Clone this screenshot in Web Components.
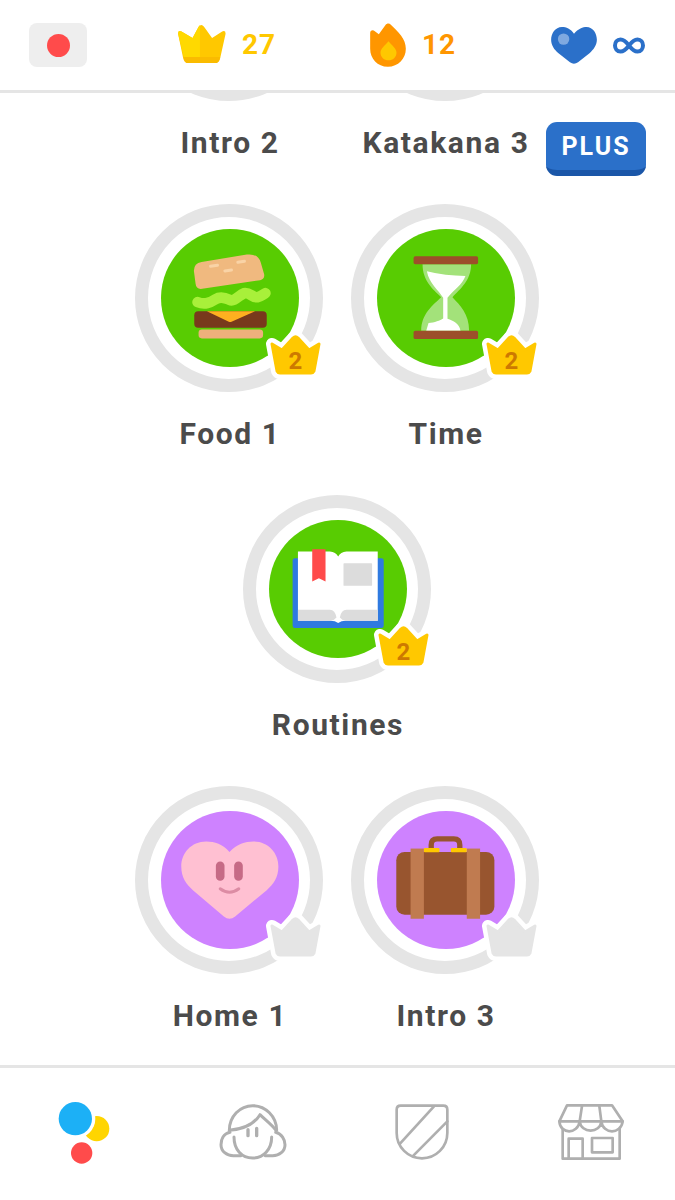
<!DOCTYPE html>
<html>
<head>
<meta charset="utf-8">
<style>
  html, body { margin: 0; padding: 0; background: #fff; }
  body { font-family: Roboto, "Liberation Sans", sans-serif; }
  svg { display: block; }
</style>
</head>
<body>
<duo-app>
  <duo-header slot="header">
    <duo-flag></duo-flag>
    <duo-stat color="#ffc800" value="27">
      <svg slot="icon" style="margin-top:-2px" width="48" height="38" viewBox="535 77 142 113">
        <path d="M545 96 L578 116 L596 82 Q604 72 612 82 L636 116 L666 96 Q677 92 676 104 L660 176 Q657 190 645 190 L565 190 Q553 190 550 176 L535 104 Q534 92 545 96Z" fill="#ffc800"/>
        <path d="M545 96 L578 116 L596 82 Q599 78 600 78 L600 172 L552 172 L535 104 Q534 92 545 96Z" fill="#ffd900"/>
        <path d="M551 172 L660 172 L658 180 Q655 190 645 190 L565 190 Q555 190 553 180Z" fill="#fabb00"/>
      </svg>
    </duo-stat>
    <duo-stat color="#ff9600" value="12">
      <svg slot="icon" width="36" height="44" viewBox="90 68 107 132">
        <path d="M143 199 C112 199 90 175 90 145 L90 98 C90 90 98 87 104 93 L116 102 L136 74 C140 68 148 68 152 73 C175 95 197 115 197 145 C197 175 174 199 143 199Z" fill="#ff9600"/>
        <path d="M145 123 C155 135 169 145 169 157 C169 170 158 180 145 180 C132 180 121 170 121 157 C121 145 135 135 145 123Z" fill="#ffc800"/>
      </svg>
    </duo-stat>
    <duo-stat color="#2b70c9">
      <svg slot="icon" width="46" height="37" viewBox="635 80 136 110">
        <path d="M703 100 C715 85 730 80 740 80 C760 80 771 100 771 118 C771 135 760 148 750 157 L715 185 Q703 193 691 185 L656 157 C645 148 635 135 635 118 C635 100 647 80 667 80 C680 80 693 85 703 100Z" fill="#2b70c9"/>
        <circle cx="672" cy="116" r="17" fill="#7fa9e0"/>
      </svg>
      <svg slot="value" width="32" height="17" viewBox="0 0 32 16">
        <path d="M16 8 C13 4 10 2 7.5 2 C4 2 2 5 2 8 C2 11 4 14 7.5 14 C10 14 13 12 16 8 C19 4 22 2 24.5 2 C28 2 30 5 30 8 C30 11 28 14 24.5 14 C22 14 19 12 16 8Z" fill="none" stroke="#2b70c9" stroke-width="4"/>
      </svg>
    </duo-stat>
  </duo-header>

  <skill-tree slot="main">
    <skill-row class="first">
      <skill-node color="#58cc02" level="2">Intro 2</skill-node>
      <skill-node color="#58cc02" level="2">Katakana 3</skill-node>
    </skill-row>
    <skill-row>
      <skill-node color="#58cc02" level="2">
        <svg slot="icon" width="138" height="138" viewBox="92 85 415 415">
          <path d="M191 212 Q190 188 214 184 L350 162 Q384 158 392 186 L402 220 Q405 236 390 239 L216 265 Q198 268 196 250Z" fill="#f0b97f"/>
          <g stroke="#f9d3a6" stroke-width="9" stroke-linecap="round">
            <path d="M241 197 L262 194"/><path d="M323 185 L343 182"/><path d="M284 211 L304 208"/>
          </g>
          <path d="M202 305 C225 314 240 306 256 296 C272 286 286 292 298 298 C314 305 326 284 342 278 C358 274 370 294 382 290 C392 288 398 282 406 278" fill="none" stroke="#a8f03a" stroke-width="32" stroke-linecap="round" stroke-linejoin="round"/>
          <rect x="192" y="332" width="218" height="50" rx="12" fill="#78391c"/>
          <path d="M230 332 L375 332 L304 364 Q300 366 296 364Z" fill="#ffb020"/>
          <rect x="205" y="387" width="194" height="27" rx="10" fill="#eeb07c"/>
        </svg>
        Food 1
      </skill-node>
      <skill-node color="#58cc02" level="2">
        <svg slot="icon" width="138" height="138" viewBox="95 85 415 415">
          <path d="M232 191 L378 191 C378 240 345 265 322 290 C345 315 372 340 372 391 L228 391 C228 340 262 315 288 290 C262 265 232 240 232 191Z" fill="#a3e27a"/>
          <path d="M245 212 Q300 226 361 226 C352 252 325 268 307 292 L307 355 C325 362 342 368 346 391 L243 391 L250 368 C268 366 285 360 294 354 L294 292 C280 268 252 250 245 212Z" fill="#fff"/>
          <rect x="205" y="167" width="194" height="24" rx="5" fill="#9c4f2a"/>
          <rect x="205" y="391" width="194" height="25" rx="5" fill="#9c4f2a"/>
        </svg>
        Time
      </skill-node>
    </skill-row>
    <skill-row>
      <skill-node color="#58cc02" level="2">
        <svg slot="icon" width="138" height="138" viewBox="85 90 415 415">
          <rect x="156" y="205" width="274" height="210" rx="7" fill="#2f7ae0"/>
          <path d="M172 185 L268 185 Q286 186 293 200 Q300 186 318 185 L412 185 L412 393 L316 393 Q302 393 293 400 Q284 393 270 393 L172 393Z" fill="#fff"/>
          <path d="M172 360 L268 360 Q284 361 288 383 Q280 393 270 393 L172 393Z M412 360 L318 360 Q302 361 298 383 Q306 393 316 393 L412 393Z" fill="#dcdcdc"/>
          <path d="M215 178 L255 178 L255 275 L235 265 L215 275Z" fill="#ff4b4b"/>
          <rect x="309" y="220" width="86" height="68" rx="2" fill="#dcdcdc"/>
        </svg>
        Routines
      </skill-node>
    </skill-row>
    <skill-row>
      <skill-node color="#ce82ff" level="0">
        <svg slot="icon" width="138" height="138" viewBox="92 95 415 415">
          <path d="M298 218 C320 195 345 187 370 187 C415 187 445 222 445 262 C445 295 430 315 410 333 L315 412 Q298 426 281 412 L188 333 C168 315 153 295 153 262 C153 222 183 187 228 187 C253 187 278 195 298 218Z" fill="#ffc0d2"/>
          <rect x="257" y="247" width="26" height="58" rx="13" fill="#c66a86"/>
          <rect x="312" y="247" width="26" height="58" rx="13" fill="#c66a86"/>
          <path d="M270 329 Q298 350 326 329" fill="none" stroke="#dc8ca4" stroke-width="9" stroke-linecap="round"/>
        </svg>
        Home 1
      </skill-node>
      <skill-node color="#ce82ff" level="0">
        <svg slot="icon" width="138" height="138" viewBox="95 95 415 415">
          <path d="M258 212 L258 197 Q258 179 276 179 L326 179 Q344 179 344 197 L344 212" fill="none" stroke="#98552f" stroke-width="16"/>
          <rect x="153" y="218" width="295" height="189" rx="25" fill="#98552f"/>
          <rect x="196" y="208" width="40" height="211" fill="#c07b50"/>
          <rect x="365" y="208" width="40" height="211" fill="#c07b50"/>
          <rect x="236" y="206" width="47" height="13" rx="3" fill="#ffc800"/>
          <rect x="317" y="206" width="48" height="13" rx="3" fill="#ffc800"/>
        </svg>
        Intro 3
      </skill-node>
    </skill-row>
    <plus-badge>PLUS</plus-badge>
  </skill-tree>

  <tab-bar slot="footer">
    <svg width="60" height="70" viewBox="74 110 180 210">
      <circle cx="202" cy="205" r="38" fill="#ffd500"/>
      <circle cx="138" cy="175" r="60" fill="#fff"/>
      <circle cx="138" cy="175" r="50" fill="#1cb0f6"/>
      <circle cx="157" cy="278" r="32" fill="#ff4b4b"/>
    </svg>
    <svg width="74" height="60" viewBox="558 127 222 180" fill="none" stroke="#afafaf" stroke-width="9" stroke-linecap="round" stroke-linejoin="round">
      <path d="M598 212 C598 170 630 138 668 138 C706 138 740 170 740 212"/>
      <path d="M598 212 C640 208 672 195 690 165 C705 180 725 195 738 212"/>
      <path d="M600 218 C580 222 573 240 573 255 C573 275 590 288 610 288 L632 288"/>
      <path d="M737 218 C755 222 765 240 765 255 C765 275 748 288 728 288 L706 288"/>
      <path d="M612 232 C612 270 635 295 668 295 C700 295 725 270 725 232"/>
      <path d="M654 210 L654 228 M680 206 L680 228" stroke-width="10"/>
    </svg>
    <svg width="54" height="58" viewBox="75 130 162 174" fill="none" stroke="#afafaf" stroke-width="8" stroke-linecap="round" stroke-linejoin="round">
      <path d="M92 138 L220 138 Q232 138 232 150 L232 220 A76 76 0 0 1 80 220 L80 150 Q80 138 92 138Z"/>
      <path d="M90 252 L192 140"/>
      <path d="M130 288 L232 185"/>
    </svg>
    <svg width="68" height="58" viewBox="560 130 204 174" fill="none" stroke="#afafaf" stroke-width="8" stroke-linecap="round" stroke-linejoin="round">
      <path d="M590 137 L725 137 L757 185 L567 185Z"/>
      <path d="M567 185 C570 225 622 225 628 185 C632 222 690 222 693 185 C698 225 752 225 757 185"/>
      <path d="M635 139 L628 185 M687 139 L693 185"/>
      <path d="M577 208 L577 297 L748 297 L748 208"/>
      <path d="M595 297 L595 237 L637 237 L637 297"/>
      <rect x="665" y="235" width="62" height="43"/>
    </svg>
  </tab-bar>
</duo-app>

<script>
const appTemplate = document.createElement("template");
appTemplate.innerHTML = /*html*/`
  <style>
    :host { display: flex; flex-direction: column; width: 675px; height: 1200px; overflow: hidden; background: #fff; }
    .main { flex: 1; min-height: 0; overflow: hidden; position: relative; }
  </style>
  <slot name="header"></slot>
  <div class="main"><slot name="main"></slot></div>
  <slot name="footer"></slot>`;

class DuoApp extends HTMLElement {
  constructor() {
    super();
    this.attachShadow({ mode: "open" });
    this.shadowRoot.appendChild(appTemplate.content.cloneNode(true));
  }
}

const headerTemplate = document.createElement("template");
headerTemplate.innerHTML = /*html*/`
  <style>
    :host {
      display: grid;
      grid-template-columns: 149px 192px 181px 1fr;
      align-items: center;
      box-sizing: border-box;
      height: 93px;
      padding: 0 0 0 29px;
      border-bottom: 3px solid #e5e5e5;
      background: #fff;
    }
  </style>
  <slot></slot>`;

class DuoHeader extends HTMLElement {
  constructor() {
    super();
    this.attachShadow({ mode: "open" });
    this.shadowRoot.appendChild(headerTemplate.content.cloneNode(true));
  }
}

const flagTemplate = document.createElement("template");
flagTemplate.innerHTML = /*html*/`
  <style>
    :host { display: flex; align-items: center; justify-content: center; width: 58px; height: 44px; border-radius: 8px; background: #eee; }
    i { display: block; width: 23px; height: 23px; border-radius: 50%; background: #ff4b4b; }
  </style>
  <i></i>`;

class DuoFlag extends HTMLElement {
  constructor() {
    super();
    this.attachShadow({ mode: "open" });
    this.shadowRoot.appendChild(flagTemplate.content.cloneNode(true));
  }
}

const statTemplate = document.createElement("template");
statTemplate.innerHTML = /*html*/`
  <style>
    :host { display: flex; align-items: center; gap: 16px; }
    .value { display: flex; align-items: center; font: 700 28px/1 Roboto, "Liberation Sans", sans-serif; letter-spacing: 1px; }
  </style>
  <slot name="icon"></slot>
  <span class="value"><slot name="value"><span id="num"></span></slot></span>`;

class DuoStat extends HTMLElement {
  constructor() {
    super();
    this.attachShadow({ mode: "open" });
    this.shadowRoot.appendChild(statTemplate.content.cloneNode(true));
  }

  connectedCallback() {
    this.shadowRoot.querySelector(".value").style.color = this.getAttribute("color");
    this.shadowRoot.getElementById("num").textContent = this.getAttribute("value") || "";
  }
}

const treeTemplate = document.createElement("template");
treeTemplate.innerHTML = /*html*/`
  <style>
    :host { display: block; position: relative; margin-top: -180px; }
  </style>
  <slot></slot>`;

class SkillTree extends HTMLElement {
  constructor() {
    super();
    this.attachShadow({ mode: "open" });
    this.shadowRoot.appendChild(treeTemplate.content.cloneNode(true));
  }
}

const rowTemplate = document.createElement("template");
rowTemplate.innerHTML = /*html*/`
  <style>
    :host { display: flex; justify-content: center; gap: 28px; height: 291px; padding-right: 1px; }
  </style>
  <slot></slot>`;

class SkillRow extends HTMLElement {
  constructor() {
    super();
    this.attachShadow({ mode: "open" });
    this.shadowRoot.appendChild(rowTemplate.content.cloneNode(true));
  }
}

const nodeTemplate = document.createElement("template");
nodeTemplate.innerHTML = /*html*/`
  <style>
    :host { display: flex; flex-direction: column; align-items: center; width: 188px; }
    .ring {
      position: relative;
      display: flex;
      align-items: center;
      justify-content: center;
      box-sizing: border-box;
      width: 188px;
      height: 188px;
      padding-left: 2px;
      border: 13px solid #e5e5e5;
      border-radius: 50%;
    }
    .disc { flex: none; width: 138px; height: 138px; border-radius: 50%; overflow: hidden; background: var(--skill-color); }
    .crown { position: absolute; left: 121px; top: 118px; width: 53px; height: 40px; }
    .crown svg { overflow: visible; }
    .level {
      position: absolute;
      left: 0;
      right: 0;
      top: 13px;
      text-align: center;
      font: 700 24px/27px Roboto, "Liberation Sans", sans-serif;
      color: #cd7900;
    }
    .name {
      margin: 24px 0 0 2px;
      font: 700 30px/36px Roboto, "Liberation Sans", sans-serif;
      letter-spacing: 1.6px;
      color: #4b4b4b;
      white-space: nowrap;
    }
  </style>
  <div class="ring">
    <div class="disc"><slot name="icon"></slot></div>
    <div class="crown">
      <svg width="53" height="40" viewBox="0 0 53 40">
        <path id="edge" d="M3 9 L13 15 L24 3 Q26.5 0.5 29 3 L40 15 L50 9 L45 36 Q44 38 42 38 L11 38 Q9 38 8 36Z" fill="#fff" stroke="#fff" stroke-width="12" stroke-linejoin="round"/>
        <path id="fill" d="M3 9 L13 15 L24 3 Q26.5 0.5 29 3 L40 15 L50 9 L45 36 Q44 38 42 38 L11 38 Q9 38 8 36Z" stroke-width="3" stroke-linejoin="round"/>
      </svg>
      <span class="level"></span>
    </div>
  </div>
  <div class="name"><slot></slot></div>`;

class SkillNode extends HTMLElement {
  constructor() {
    super();
    this.attachShadow({ mode: "open" });
    this.shadowRoot.appendChild(nodeTemplate.content.cloneNode(true));
  }

  connectedCallback() {
    this.style.setProperty("--skill-color", this.getAttribute("color"));
    const level = Number(this.getAttribute("level"));
    const fill = this.shadowRoot.getElementById("fill");
    const tone = level > 0 ? "#ffc800" : "#e5e5e5";
    fill.setAttribute("fill", tone);
    fill.setAttribute("stroke", tone);
    if (level > 0) this.shadowRoot.querySelector(".level").textContent = level;
  }
}

const plusTemplate = document.createElement("template");
plusTemplate.innerHTML = /*html*/`
  <style>
    :host {
      position: absolute;
      top: 209px;
      right: 29px;
      box-sizing: border-box;
      width: 100px;
      height: 54px;
      border-radius: 11px;
      border-bottom: 6px solid #1a56a8;
      background: #2b70c9;
      color: #fff;
      text-align: center;
      font: 700 25px/49px Roboto, "Liberation Sans", sans-serif;
      letter-spacing: 2px;
    }
  </style>
  <slot></slot>`;

class PlusBadge extends HTMLElement {
  constructor() {
    super();
    this.attachShadow({ mode: "open" });
    this.shadowRoot.appendChild(plusTemplate.content.cloneNode(true));
  }
}

const tabTemplate = document.createElement("template");
tabTemplate.innerHTML = /*html*/`
  <style>
    :host {
      display: grid;
      grid-template-columns: repeat(4, 1fr);
      justify-items: center;
      align-items: center;
      box-sizing: border-box;
      height: 135px;
      padding-bottom: 4px;
      border-top: 3px solid #e5e5e5;
      background: #fff;
    }
  </style>
  <slot></slot>`;

class TabBar extends HTMLElement {
  constructor() {
    super();
    this.attachShadow({ mode: "open" });
    this.shadowRoot.appendChild(tabTemplate.content.cloneNode(true));
  }
}

customElements.define("duo-app", DuoApp);
customElements.define("duo-header", DuoHeader);
customElements.define("duo-flag", DuoFlag);
customElements.define("duo-stat", DuoStat);
customElements.define("skill-tree", SkillTree);
customElements.define("skill-row", SkillRow);
customElements.define("skill-node", SkillNode);
customElements.define("plus-badge", PlusBadge);
customElements.define("tab-bar", TabBar);
</script>
</body>
</html>
